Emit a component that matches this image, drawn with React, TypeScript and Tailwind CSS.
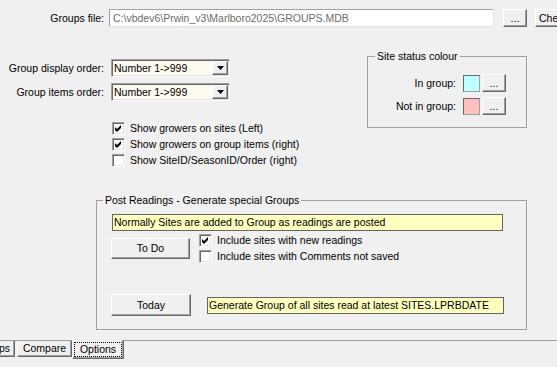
import React from 'react';

const raised =
  'bg-[#f0f0f0] border border-t-white border-l-white border-r-[#696969] border-b-[#696969] shadow-[inset_-1px_-1px_0_#a0a0a0]';
const sunken =
  'border border-t-[#a0a0a0] border-l-[#a0a0a0] border-r-white border-b-white shadow-[inset_1px_1px_0_#696969,inset_-1px_-1px_0_#e3e3e3]';

const Button = ({ label, className = '' }: { label: string; className?: string }) => (
  <div className={`${raised} flex items-center justify-center shrink-0 ${className}`}>{label}</div>
);

const Check = ({ checked, label }: { checked?: boolean; label: string }) => (
  <div className="flex items-center h-[13px]">
    <div className={`${sunken} bg-white w-[13px] h-[13px] shrink-0 flex items-center justify-center`}>
      {checked && (
        <svg width="7" height="7" viewBox="0 0 7 7">
          <path d="M0 2L2 4L6 0V3L2 7L0 5Z" fill="#000" />
        </svg>
      )}
    </div>
    <span className="ml-[5px] whitespace-nowrap">{label}</span>
  </div>
);

const Combo = ({ label }: { label: string }) => (
  <div className="flex items-center h-[18px]">
    <span className="w-[104px] text-right whitespace-nowrap">{label}</span>
    <div className={`${sunken} ml-[7px] w-[119px] h-[18px] flex bg-[#fffaf0]`}>
      <span className="flex-1 pl-[2px] leading-[16px] whitespace-nowrap">{'Number 1->999'}</span>
      <div className={`${raised} w-[16px] h-[14px] mt-[1px] mr-[1px] flex items-center justify-center`}>
        <svg width="7" height="4" viewBox="0 0 7 4">
          <path d="M0 0H7L3.5 4Z" fill="#000" />
        </svg>
      </div>
    </div>
  </div>
);

const Swatch = ({ label, color }: { label: string; color: string }) => (
  <div className="flex items-center justify-end h-[18px] mr-[13px]">
    <span className="whitespace-nowrap">{label}</span>
    <div
      className={`ml-[7px] w-[17px] h-[17px] border border-t-[#696969] border-l-[#696969] border-r-[#a0a0a0] border-b-[#a0a0a0] ${color}`}
    />
    <Button label="..." className="ml-[2px] w-[24px] h-[18px]" />
  </div>
);

const Note = ({ text, className = '' }: { text: string; className?: string }) => (
  <div className={`h-[17px] bg-[#ffffc0] border border-[#646464] pl-[1px] leading-[15px] whitespace-nowrap ${className}`}>
    {text}
  </div>
);

export default function App() {
  return (
    <div className="w-[557px] h-[367px] overflow-hidden bg-[#f0f0f0] text-black text-[10.5px] font-['Liberation_Sans',Arial,sans-serif] leading-[13px]">
      {/* groups file */}
      <div className="flex items-center h-[18px] mt-[9px]">
        <span className="w-[104px] shrink-0 text-right whitespace-nowrap">Groups file:</span>
        <div className="ml-[5px] w-[385px] shrink-0 h-[18px] bg-white border border-t-[#a0a0a0] border-l-[#a0a0a0] border-r-[#e3e3e3] border-b-[#e3e3e3] text-[#6d6d6d] pl-[3px] leading-[16px] whitespace-nowrap">
          C:\vbdev6\Prwin_v3\Marlboro2025\GROUPS.MDB
        </div>
        <Button label="..." className="ml-[9px] w-[24px] h-[18px]" />
        <Button label="Check" className="ml-[8px] w-[50px] h-[18px] !justify-start pl-[3px]" />
      </div>

      {/* order + site status */}
      <div className="flex items-start mt-[23px]">
        <div className="w-[367px] pt-[9px]">
          <Combo label="Group display order:" />
          <div className="mt-[6px]">
            <Combo label="Group items order:" />
          </div>
          <div className="ml-[112px] mt-[21px] flex flex-col gap-[3px]">
            <Check checked label="Show growers on sites (Left)" />
            <Check checked label="Show growers on group items (right)" />
            <Check label="Show SiteID/SeasonID/Order (right)" />
          </div>
        </div>
        <fieldset className="w-[160px] h-[78px] border border-[#a0a0a0] px-[7px]">
          <legend className="px-[2px] leading-[13px]">Site status colour</legend>
          <div className="mt-[11px]">
            <Swatch label="In group:" color="bg-[#c0ffff]" />
          </div>
          <div className="mt-[5px]">
            <Swatch label="Not in group:" color="bg-[#ffc0c0]" />
          </div>
        </fieldset>
      </div>

      {/* post readings */}
      <fieldset className="ml-[96px] mt-[27px] w-[431px] h-[136px] border border-[#a0a0a0] px-[6px]">
        <legend className="px-[2px] leading-[13px]">Post Readings - Generate special Groups</legend>
        <Note text="Normally Sites are added to Group as readings are posted" className="ml-[9px] mt-[7px] w-[391px]" />
        <div className="flex items-start mt-[3px]">
          <Button label="To Do" className="ml-[8px] mt-[4px] w-[79px] h-[21px]" />
          <div className="ml-[9px] flex flex-col gap-[3px]">
            <Check checked label="Include sites with new readings" />
            <Check label="Include sites with Comments not saved" />
          </div>
        </div>
        <div className="flex items-center mt-[31px]">
          <Button label="Today" className="ml-[8px] w-[80px] h-[22px]" />
          <Note text="Generate Group of all sites read at latest SITES.LPRBDATE" className="ml-[16px] w-[297px]" />
        </div>
      </fieldset>

      {/* tabs */}
      <div className="mt-[10px] border-t border-[#a0a0a0] flex items-start h-[20px]">
        <div className="w-[15px] h-[16px] border-r border-b border-r-[#696969] border-b-[#696969] shadow-[inset_-1px_-1px_0_#a0a0a0] flex items-center justify-end pr-[4px] overflow-hidden">
          ps
        </div>
        <div className="ml-[2px] w-[55px] h-[16px] border-l border-r border-b border-l-white border-r-[#696969] border-b-[#696969] shadow-[inset_-1px_-1px_0_#a0a0a0] flex items-center justify-center">
          Compare
        </div>
        <div className="-mt-[1px] w-[52px] h-[19px] border-l border-r border-b border-l-white border-r-[#696969] border-b-[#696969] shadow-[inset_-1px_-1px_0_#a0a0a0] bg-[#f0f0f0] px-[1px] pt-[2px] pb-[1px]">
          <div className="h-full border border-dotted border-black flex items-center justify-center">Options</div>
        </div>
      </div>
    </div>
  );
}
